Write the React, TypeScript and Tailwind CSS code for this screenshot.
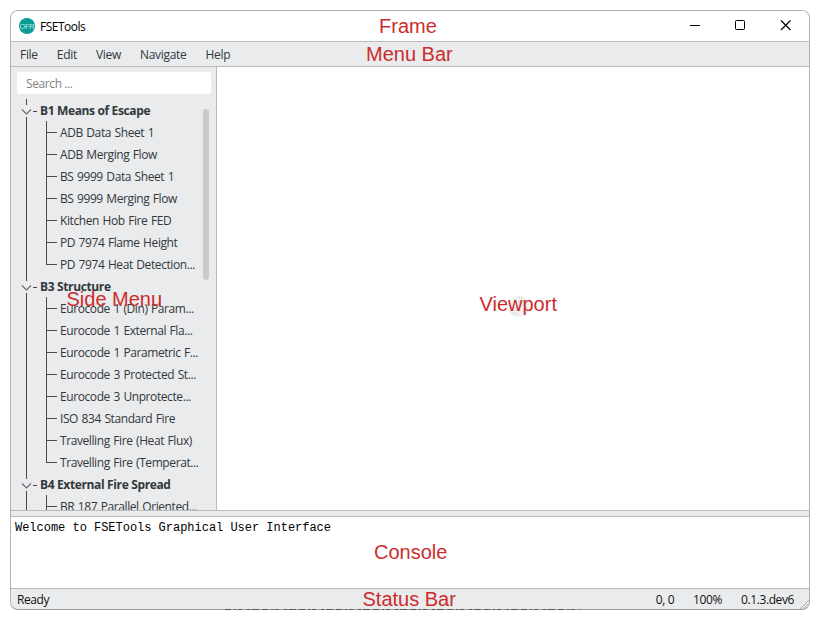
import React from "react";

const groups = [
  {
    title: "B1 Means of Escape",
    items: [
      "ADB Data Sheet 1",
      "ADB Merging Flow",
      "BS 9999 Data Sheet 1",
      "BS 9999 Merging Flow",
      "Kitchen Hob Fire FED",
      "PD 7974 Flame Height",
      "PD 7974 Heat Detection...",
    ],
  },
  {
    title: "B3 Structure",
    items: [
      "Eurocode 1 (Din) Param...",
      "Eurocode 1 External Fla...",
      "Eurocode 1 Parametric F...",
      "Eurocode 3 Protected St...",
      "Eurocode 3 Unprotecte...",
      "ISO 834 Standard Fire",
      "Travelling Fire (Heat Flux)",
      "Travelling Fire (Temperat...",
    ],
  },
  { title: "B4 External Fire Spread", items: ["BR 187 Parallel Oriented...", ""] },
];

function GroupRow({ title }: { title: string }) {
  return (
    <div className="flex h-[22px] shrink-0 items-center">
      <svg width="29" height="22" className="shrink-0" fill="none" stroke="#47494b" shapeRendering="crispEdges">
        <path d="M15.5 0V6M15.5 18V22M22 12.5H26" />
        <path d="M11 10.5L15.5 15L20 10.5" shapeRendering="auto" stroke="#6b6d70" strokeWidth="1.2" />
      </svg>
      <span className="pt-[2px] font-bold tracking-[-0.36px] whitespace-nowrap">{title}</span>
    </div>
  );
}

function ItemRow({ label, last }: { label: string; last: boolean }) {
  return (
    <div className="flex h-[22px] shrink-0 items-center">
      <svg width="49" height="22" className="shrink-0" fill="none" stroke="#47494b" shapeRendering="crispEdges">
        <path d="M15.5 0V22" />
        <path d={last ? "M35.5 0V12M35 11.5H46" : "M35.5 0V22M35 11.5H46"} />
      </svg>
      <span className="pt-[2px] tracking-[-0.41px] [word-spacing:0.8px] whitespace-nowrap">{label}</span>
    </div>
  );
}

function Note({ className, children }: { className: string; children: React.ReactNode }) {
  return (
    <span
      className={
        "absolute font-['Liberation_Sans',Arial,sans-serif] text-[20px] leading-6 tracking-normal whitespace-nowrap text-[#cb2c2c] " +
        className
      }
    >
      {children}
    </span>
  );
}

export default function App() {
  return (
    <div className="relative h-[620px] w-[820px] bg-white p-[10px] font-['Open_Sans','Noto_Sans',sans-serif] text-[12px] leading-4 text-[#33373b]">
      <div className="flex h-[600px] w-[800px] flex-col overflow-hidden rounded-[8px] border border-[#b1b2b4] border-b-[#999b9d] bg-[#e9ebed]">
        <header className="flex h-[31px] shrink-0 items-center border-b border-[#b9babc] bg-white pl-2 text-black">
          <svg width="16" height="16" viewBox="0 0 16 16">
            <circle cx="8" cy="8" r="8" fill="#0a9b94" />
            <text
              x="8"
              y="10.6"
              textAnchor="middle"
              fontSize="7.5"
              letterSpacing="-0.3"
              fill="#b4ebe8"
              fontFamily="Liberation Sans, sans-serif"
            >
              OFR
            </text>
          </svg>
          <span className="ml-[5px] pt-px tracking-[-0.5px]">FSETools</span>
          <svg width="120" height="30" className="ml-auto" fill="none" stroke="#000" strokeWidth="1">
            <path d="M1 14.5H11" shapeRendering="crispEdges" />
            <rect x="46.5" y="9.5" width="9" height="9" rx="1" />
            <path d="M92 9.5L101.5 19M101.5 9.5L92 19" strokeWidth="1.2" />
          </svg>
        </header>
        <nav className="flex h-[25px] shrink-0 items-center gap-[19px] border-b border-[#b9babc] pt-[2px] pl-[9px] tracking-[-0.3px]">
          <span>File</span>
          <span>Edit</span>
          <span>View</span>
          <span>Navigate</span>
          <span>Help</span>
        </nav>
        <main className="flex h-[443px] shrink-0">
          <aside className="flex w-[206px] shrink-0 flex-col border-r border-[#b9babc]">
            <div className="mt-[5px] ml-[6px] flex h-[22px] w-[194px] shrink-0 items-center rounded-[2px] bg-white pt-[2px] pl-[9px] tracking-[-0.4px] text-[#808285]">
              Search ...
            </div>
            <div className="mt-[5px] flex min-h-0 flex-1">
              <div className="flex w-[192px] flex-col overflow-hidden">
                {groups.map((g) => (
                  <React.Fragment key={g.title}>
                    <GroupRow title={g.title} />
                    {g.items.map((label, i) => (
                      <ItemRow key={label} label={label} last={i === g.items.length - 1} />
                    ))}
                  </React.Fragment>
                ))}
              </div>
              <div className="mt-[10px] h-[171px] w-[6px] rounded-full bg-[#cacaca]" />
            </div>
          </aside>
          <section className="flex flex-1 items-center justify-center bg-white">
            <svg width="21" height="21" viewBox="0 0 21 21" className="mt-[36px] ml-[11px]">
              <circle cx="10.5" cy="10.5" r="10.5" fill="#f3f3f4" />
              <path d="M10.5 10.5V0A10.5 10.5 0 0 1 21 10.5ZM10.5 10.5V21A10.5 10.5 0 0 1 0 10.5Z" fill="#ececed" />
            </svg>
          </section>
        </main>
        <div className="h-[7px] shrink-0 border-y border-[#b9babc]" />
        <section className="h-[71px] shrink-0 bg-white pt-[3px] pl-1 font-['Liberation_Mono','Courier_New',monospace] text-[12px] tracking-[-0.02px] text-black">
          Welcome to FSETools Graphical User Interface
        </section>
        <footer className="relative flex flex-1 items-center border-t border-[#b9babc] pt-[2px] pr-[15px] pl-[6px] tracking-[-0.4px] text-[#111]">
          <span>Ready</span>
          <span className="ml-auto">0, 0</span>
          <span className="ml-[19px]">100%</span>
          <span className="ml-[19px]">0.1.3.dev6</span>
          <svg width="9" height="9" className="absolute right-0 bottom-0" stroke="#aaacae">
            <path d="M0 9L9 0M3 9L9 3M6 9L9 6" />
          </svg>
        </footer>
      </div>
      <svg width="356" height="1" className="absolute top-[609px] left-[225px]">
        <path d="M0 0.5H356" stroke="#55585c" strokeDasharray="6 3 2 2 4 5 3 2 7 3" />
      </svg>
      <Note className="top-[14px] left-[379px]">Frame</Note>
      <Note className="top-[42px] left-[366px]">Menu Bar</Note>
      <Note className="top-[287px] left-[66.5px]">Side Menu</Note>
      <Note className="top-[292px] left-[479.5px]">Viewport</Note>
      <Note className="top-[540px] left-[374px]">Console</Note>
      <Note className="top-[587px] left-[362.5px]">Status Bar</Note>
    </div>
  );
}
